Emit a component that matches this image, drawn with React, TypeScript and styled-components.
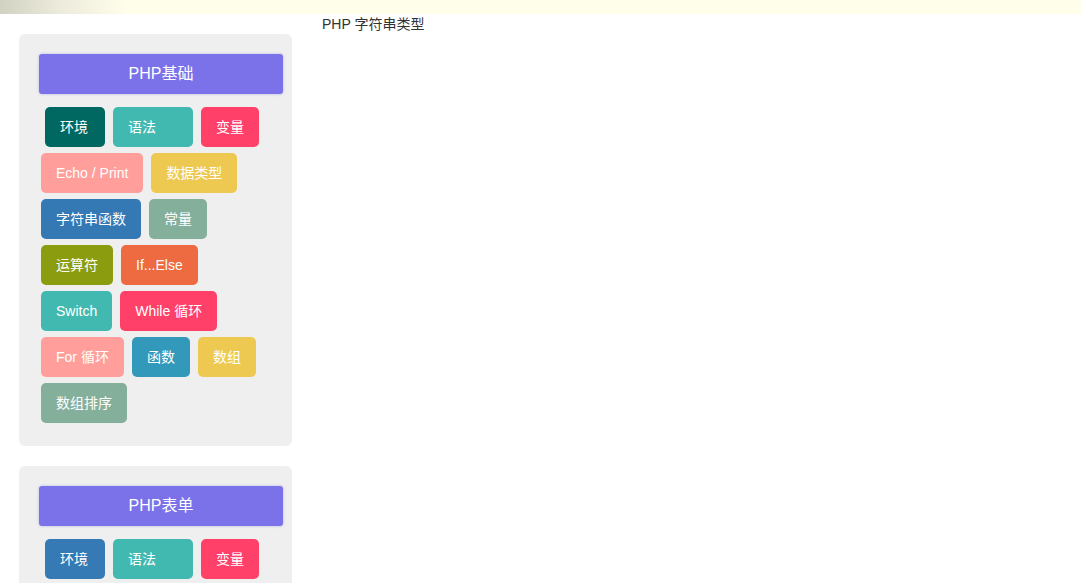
import React from "react";
import styled, { createGlobalStyle } from "styled-components";

const GlobalStyle = createGlobalStyle`
  html, body {
    margin: 0;
    padding: 0;
    background: #ffffff;
    font-family: "Liberation Sans", Arial, "Noto Sans CJK SC", sans-serif;
    font-size: 14px;
    color: #333333;
  }
`;

const TopBar = styled.div`
  height: 14px;
  background: linear-gradient(to right, #d2d2c2 0px, #ecebdc 60px, #fffeeb 125px, #fffeeb 100%);
`;

const Layout = styled.div`
  display: flex;
  align-items: flex-start;
`;

const Sidebar = styled.aside`
  display: flex;
  flex-direction: column;
  gap: 20px;
  margin: 20px 0 0 19px;
  width: 273px;
  flex: none;
`;

const Panel = styled.section`
  background: #efefef;
  border-radius: 6px;
  padding: 20px 9px 23px 20px;
  display: flex;
  flex-direction: column;
  gap: 13px;
`;

const PanelHeader = styled.div`
  height: 40px;
  line-height: 40px;
  background: #7b72e9;
  border-radius: 3px;
  box-shadow: 0 0 3px rgba(123, 114, 233, 0.45);
  color: #ffffff;
  font-size: 16px;
  text-align: center;
`;

const TagList = styled.div`
  display: flex;
  flex-wrap: wrap;
  gap: 6px 8px;
  width: 230px;
  margin-left: 2px;
`;

const Tag = styled.a<{ $bg: string; $first?: boolean; $w?: number }>`
  display: block;
  box-sizing: border-box;
  height: 40px;
  line-height: 40px;
  padding: 0 15px;
  border-radius: 5px;
  background: ${(p) => p.$bg};
  color: #ffffff;
  font-size: 14px;
  text-decoration: none;
  white-space: nowrap;
  margin-left: ${(p) => (p.$first ? "4px" : "0")};
  text-align: ${(p) => (p.$w ? "left" : "center")};
  ${(p) => (p.$w ? `width: ${p.$w}px;` : "")}
`;

const Main = styled.main`
  margin-left: 30px;
  flex: 1;
`;

const Title = styled.div`
  line-height: 20px;
  font-size: 14px;
  color: #333333;
`;

type TagDef = { label: string; bg: string; w?: number };

const basics = (firstColor: string): TagDef[] => [
  { label: "环境", bg: firstColor, w: 60 },
  { label: "语法", bg: "#41b9b0", w: 80 },
  { label: "变量", bg: "#ff4068" },
  { label: "Echo / Print", bg: "#ff9e9a" },
  { label: "数据类型", bg: "#edc951" },
  { label: "字符串函数", bg: "#3478b4" },
  { label: "常量", bg: "#84af9b" },
  { label: "运算符", bg: "#8c9c0f" },
  { label: "If...Else", bg: "#ee6a40" },
  { label: "Switch", bg: "#41b9b0" },
  { label: "While 循环", bg: "#ff4068" },
  { label: "For 循环", bg: "#ff9e9a" },
  { label: "函数", bg: "#3399bb" },
  { label: "数组", bg: "#edc951" },
  { label: "数组排序", bg: "#84af9b" },
];

const panels = [
  { title: "PHP基础", tags: basics("#006861") },
  { title: "PHP表单", tags: basics("#3579b5") },
];

export default function App() {
  return (
    <>
      <GlobalStyle />
      <TopBar />
      <Layout>
        <Sidebar>
          {panels.map((panel) => (
            <Panel key={panel.title}>
              <PanelHeader>{panel.title}</PanelHeader>
              <TagList>
                {panel.tags.map((t, i) => (
                  <Tag key={t.label} href="#" $bg={t.bg} $first={i === 0} $w={t.w}>
                    {t.label}
                  </Tag>
                ))}
              </TagList>
            </Panel>
          ))}
        </Sidebar>
        <Main>
          <Title>PHP 字符串类型</Title>
        </Main>
      </Layout>
    </>
  );
}
